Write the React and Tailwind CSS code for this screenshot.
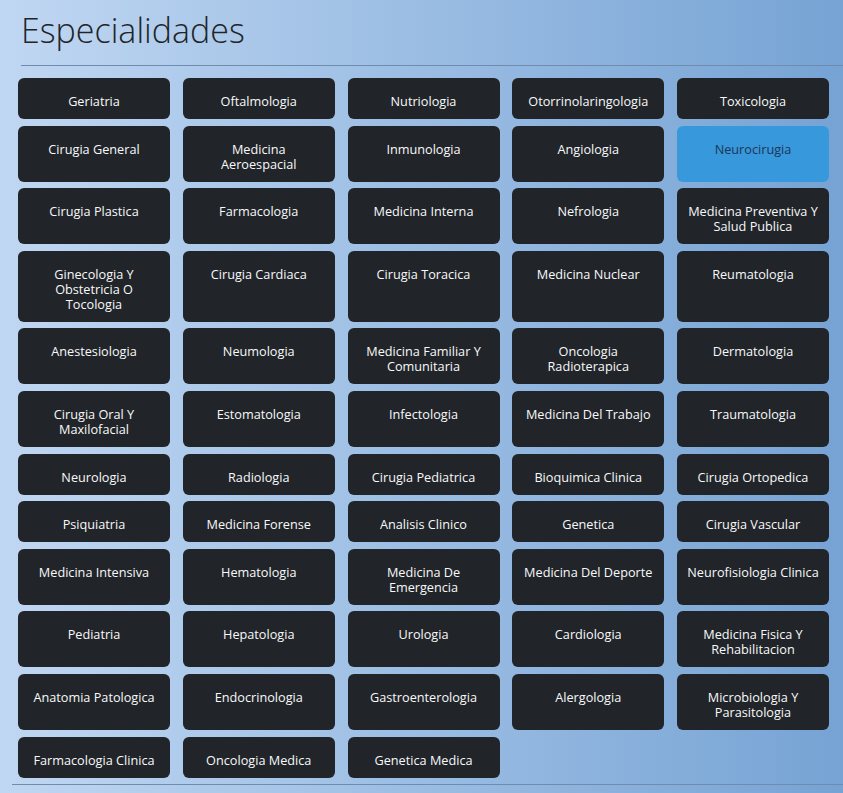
import { useState } from "react";

const especialidades = [
  "Geriatria",
  "Oftalmologia",
  "Nutriologia",
  "Otorrinolaringologia",
  "Toxicologia",
  "Cirugia General",
  "Medicina\nAeroespacial",
  "Inmunologia",
  "Angiologia",
  "Neurocirugia",
  "Cirugia Plastica",
  "Farmacologia",
  "Medicina Interna",
  "Nefrologia",
  "Medicina Preventiva Y\nSalud Publica",
  "Ginecologia Y\nObstetricia O\nTocologia",
  "Cirugia Cardiaca",
  "Cirugia Toracica",
  "Medicina Nuclear",
  "Reumatologia",
  "Anestesiologia",
  "Neumologia",
  "Medicina Familiar Y\nComunitaria",
  "Oncologia\nRadioterapica",
  "Dermatologia",
  "Cirugia Oral Y\nMaxilofacial",
  "Estomatologia",
  "Infectologia",
  "Medicina Del Trabajo",
  "Traumatologia",
  "Neurologia",
  "Radiologia",
  "Cirugia Pediatrica",
  "Bioquimica Clinica",
  "Cirugia Ortopedica",
  "Psiquiatria",
  "Medicina Forense",
  "Analisis Clinico",
  "Genetica",
  "Cirugia Vascular",
  "Medicina Intensiva",
  "Hematologia",
  "Medicina De\nEmergencia",
  "Medicina Del Deporte",
  "Neurofisiologia Clinica",
  "Pediatria",
  "Hepatologia",
  "Urologia",
  "Cardiologia",
  "Medicina Fisica Y\nRehabilitacion",
  "Anatomia Patologica",
  "Endocrinologia",
  "Gastroenterologia",
  "Alergologia",
  "Microbiologia Y\nParasitologia",
  "Farmacologia Clinica",
  "Oncologia Medica",
  "Genetica Medica",
];

const App = () => {
  const [selected, setSelected] = useState("Neurocirugia");

  return (
    <section className="min-h-screen bg-linear-to-r from-[#c0d7f2] to-[#76a3d4] pb-4 font-['Open_Sans',sans-serif]">
      <h1 className="pl-[21px] pt-[10px] text-[34px] leading-[41px] font-light text-[#212529]">
        Especialidades
      </h1>
      <hr className="ml-[21px] mt-[14px] border-t border-[#6f8cae]" />
      <div className="ml-[18px] mt-[12px] grid w-[811px] grid-cols-5 gap-x-[12.75px] gap-y-[6.6px]">
        {especialidades.map((esp) => (
          <button
            key={esp}
            onClick={() => setSelected(esp)}
            className={`${
              selected === esp
                ? "bg-[#3798db] text-[#1c3557]"
                : "bg-[#212529] text-[#f8f9fa]"
            } rounded-md px-2 pt-[16px] pb-[10px] text-center text-[12.7px] leading-[15px] whitespace-pre flex justify-center items-start`}
          >
            {esp}
          </button>
        ))}
      </div>
      <hr className="ml-[12px] mt-[6px] border-t border-[#6f8cae]" />
    </section>
  );
};

export default App;
